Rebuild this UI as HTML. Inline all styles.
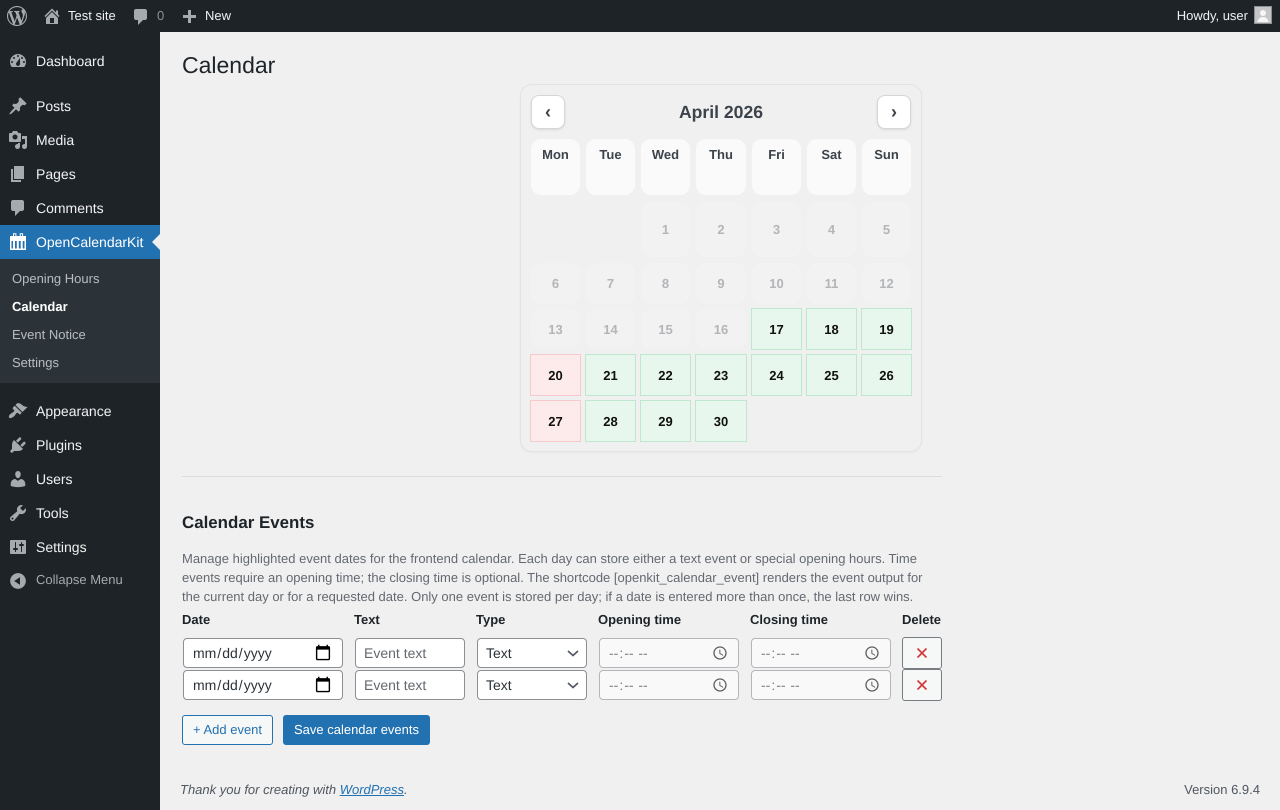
<!DOCTYPE html>
<html lang="en"><head><meta charset="utf-8"><title>Calendar</title>
<style>
html,body{margin:0;padding:0;width:1280px;height:810px;overflow:hidden;background:#f0f0f1;font:13px "Liberation Sans",sans-serif;color:#3c434a;text-rendering:geometricPrecision}
*{box-sizing:border-box}
.a,.t,svg.i,.c,input,select,button{position:absolute}
.t{white-space:nowrap;line-height:20px}
svg.i{width:20px;height:20px;fill:#a7aaad}
.m{left:36px;font-size:14px;color:#f0f0f1}
.s{left:12px;color:rgba(240,246,252,.7)}
.b{font-size:13px;color:#f0f0f1;top:6px}
.th{font-weight:bold;color:#1d2327;top:610px}
.c{display:flex;align-items:center;justify-content:center;font-weight:bold;font-size:13px;border-radius:10px;color:#b4b5b8;background:#f2f2f2}
.hd{background:#fafafa;color:#3c434a;align-items:flex-start;padding-top:8px;line-height:16px;height:56px;top:139px}
.h{box-sizing:content-box;margin:-1px;border:1px solid #bde8cd;background:#e8f7ed;border-radius:0;color:#111}
.r{border-color:#f6c9cb;background:#fdebec}
.x1{left:531px;width:49px}.x2{left:586px;width:49px}.x3{left:641px;width:49px}.x4{left:696px;width:50px}.x5{left:752px;width:49px}.x6{left:807px;width:49px}.x7{left:862px;width:49px}
.y1{top:202px;height:55px}.y2{top:263px;height:41px}.y3{top:309px;height:40px}.y4{top:355px;height:40px}.y5{top:401px;height:40px}
.nav{top:95px;width:34px;height:34px;background:#fff;border:1px solid #d6d6d6;border-radius:8px;box-shadow:0 1px 2px rgba(0,0,0,.1);font:bold 18px/30px "Liberation Sans",sans-serif;color:#3c434a;padding:0;text-align:center}
input,select{margin:0;height:30px;border:1px solid #8c8f94;border-radius:4px;background:#fff;color:#2c3338;font:14px "Liberation Sans",sans-serif;padding:0 8px;outline:0;text-rendering:geometricPrecision}
input::placeholder{color:#646970;opacity:1}
input::-webkit-calendar-picker-indicator{width:18px;height:18px;margin:-1px 2.500px 0 0;padding:0}
input[type=time]::-webkit-calendar-picker-indicator{width:16px;height:16px;margin:-1px 2.500px 0 0}
select{appearance:none;-webkit-appearance:none;width:110px;left:477px;padding:0 24px 0 8px}
.d{left:183px;width:160px}.e{left:355px;width:110px}
.o{width:140px;opacity:.6}
.del{left:902px;width:40px;height:32px;background:#f6f7f7;border:1px solid #787c82;border-radius:3px;padding:0;display:block}
.del svg{position:absolute;left:13px;top:9px;width:12px;height:12px;stroke:#d63638;stroke-width:1.6;fill:none}
.chev{position:absolute;left:566px;width:14px;height:14px;fill:none;stroke:#50575e;stroke-width:1.7}
.btn{top:715px;height:30px;border-radius:3px;font:13px "Liberation Sans",sans-serif;padding:0;text-align:center;line-height:28px;text-rendering:geometricPrecision}
</style></head><body>

<div class="a" style="left:0;top:0;width:1280px;height:32px;background:#1d2327"></div>
<div class="a" style="left:0;top:32px;width:160px;height:778px;background:#1d2327"></div>
<div class="a" style="left:0;top:225px;width:160px;height:34px;background:#2271b1"></div>
<div class="a" style="left:0;top:259px;width:160px;height:124px;background:#2c3338"></div>
<div class="a" style="left:152px;top:234px;width:0;height:0;border:8px solid transparent;border-left:0;border-right-color:#f0f0f1"></div>

<svg class="i" viewBox="0 0 20 20" style="left:7px;top:6px"><path d="M20 10c0-5.51-4.49-10-10-10C4.48 0 0 4.49 0 10c0 5.52 4.48 10 10 10 5.51 0 10-4.48 10-10zM7.78 15.37L4.37 6.22c.55-.02 1.17-.08 1.17-.08.5-.06.44-1.13-.06-1.11 0 0-1.45.11-2.37.11-.18 0-.37 0-.58-.01C4.12 2.69 6.87 1.11 10 1.11c2.33 0 4.45.87 6.05 2.34-.68-.11-1.65.39-1.65 1.58 0 .74.45 1.36.9 2.1.35.61.55 1.36.55 2.46 0 1.49-1.4 5-1.4 5l-3.03-8.37c.54-.02.82-.17.82-.17.5-.05.44-1.25-.06-1.22 0 0-1.44.12-2.38.12-.87 0-2.33-.12-2.33-.12-.5-.03-.56 1.2-.06 1.22l.92.08 1.26 3.41zM17.41 10c.24-.64.74-1.87.43-4.25.7 1.29 1.05 2.71 1.05 4.25 0 3.29-1.73 6.24-4.4 7.78.97-2.59 1.94-5.2 2.92-7.78zM6.1 18.09C3.12 16.65 1.11 13.53 1.11 10c0-1.3.23-2.48.72-3.59C3.25 10.3 4.67 14.2 6.1 18.09zm4.03-6.63l2.58 6.98c-.86.29-1.76.45-2.71.45-.79 0-1.57-.11-2.29-.33.81-2.38 1.62-4.74 2.42-7.1z"/></svg>
<svg class="i" viewBox="0 0 20 20" style="left:42px;top:6px"><path d="M16 8.5l1.53 1.53-1.06 1.06L10 4.62l-6.47 6.47-1.06-1.06L10 2.5l4 4v-2h2v4zm-6-2.46l6 5.99V18H4v-5.97zM12 17v-5H8v5h4z"/></svg>
<div class="t b" style="left:68px">Test site</div>
<svg class="i" viewBox="0 0 20 20" style="left:131px;top:7px"><path d="M5 2h9c1.1 0 2 .9 2 2v7c0 1.1-.9 2-2 2h-2l-5 5v-5H5c-1.1 0-2-.9-2-2V4c0-1.1.9-2 2-2z"/></svg>
<div class="t b" style="left:157px;color:#8c8f94">0</div>
<svg class="i" viewBox="0 0 20 20" style="left:179px;top:8px"><path d="M17 7v3h-5v5H9v-5H4V7h5V2h3v5h5z"/></svg>
<div class="t b" style="left:205px">New</div>
<div class="t b" style="right:32px">Howdy, user</div>
<svg class="a" viewBox="0 0 18 18" style="left:1254px;top:6px;width:18px;height:18px"><rect width="18" height="18" fill="#8c8f94"/><rect x="1" y="1" width="16" height="16" fill="#c6c6c6"/><circle cx="9" cy="7" r="3" fill="#f6f6f6"/><path d="M3.500 16c.3-3 2.500-5 5.500-5s5.200 2 5.500 5z" fill="#f6f6f6"/></svg>

<svg class="i" viewBox="0 0 20 20" style="left:8px;top:51px"><path fill-rule="evenodd" d="M3.760 16h12.480c1.100-1.370 1.760-3.110 1.760-5 0-4.420-3.580-8-8-8s-8 3.580-8 8c0 1.890.66 3.630 1.760 5zM10 4c.55 0 1 .45 1 1s-.45 1-1 1-1-.45-1-1 .45-1 1-1zM6 6c.55 0 1 .45 1 1s-.45 1-1 1-1-.45-1-1 .45-1 1-1zm8 0c.55 0 1 .45 1 1s-.45 1-1 1-1-.45-1-1 .45-1 1-1zm-5.370 5.550L12 7v6c0 1.100-.9 2-2 2s-2-.9-2-2c0-.57.24-1.080.63-1.450zM4 10c.55 0 1 .45 1 1s-.45 1-1 1-1-.45-1-1 .45-1 1-1zm12 0c.55 0 1 .45 1 1s-.45 1-1 1-1-.45-1-1 .45-1 1-1z"/></svg>
<div class="t m" style="top:51px">Dashboard</div>
<svg class="i" viewBox="0 0 20 20" style="left:8px;top:96px"><path d="M10.440 3.020l1.820-1.820 6.360 6.350-1.830 1.820c-1.050-.68-2.480-.57-3.410.36l-.75.75c-.92.93-1.040 2.350-.35 3.410l-1.830 1.820-2.410-2.410-2.800 2.790c-.42.42-3.380 2.710-3.800 2.290s1.860-3.390 2.280-3.810l2.790-2.790L4.100 9.360l1.830-1.820c1.050.69 2.480.57 3.400-.36l.75-.75c.93-.92 1.050-2.350.36-3.410z"/></svg>
<div class="t m" style="top:96px">Posts</div>
<svg class="i" viewBox="0 0 20 20" style="left:8px;top:130px"><path fill-rule="evenodd" d="M13 11V4c0-.55-.45-1-1-1h-1.670L9 1H5L3.670 3H2c-.55 0-1 .45-1 1v7c0 .55.45 1 1 1h10c.55 0 1-.45 1-1zM7 4.500c1.380 0 2.500 1.120 2.500 2.500S8.380 9.500 7 9.500 4.500 8.380 4.500 7 5.620 4.500 7 4.500zM14 6h5v10.500c0 1.380-1.120 2.500-2.500 2.500S14 17.880 14 16.500s1.120-2.500 2.500-2.500c.17 0 .34.020.5.050V9h-3V6zm-4 8.050V13h2v3.500c0 1.380-1.120 2.500-2.500 2.500S7 17.880 7 16.500 8.120 14 9.500 14c.17 0 .34.020.5.050z"/></svg>
<div class="t m" style="top:130px">Media</div>
<svg class="i" viewBox="0 0 20 20" style="left:8px;top:164px"><path d="M6 15V2h10v13H6zm-1 1h8v2H3V5h2v11z"/></svg>
<div class="t m" style="top:164px">Pages</div>
<svg class="i" viewBox="0 0 20 20" style="left:8px;top:198px"><path d="M5 2h9c1.100 0 2 .9 2 2v7c0 1.100-.9 2-2 2h-2l-5 5v-5H5c-1.100 0-2-.9-2-2V4c0-1.100.9-2 2-2z"/></svg>
<div class="t m" style="top:198px">Comments</div>
<svg class="i" viewBox="0 0 20 20" style="left:8px;top:232px;fill:#fff"><path fill-rule="evenodd" d="M2 4h16v14H2zM3.500 9v7.500H5V9zM7 9v7.500h1.800V9zM10.800 9v7.500h1.900V9zM14.700 9v7.500h1.800V9z"/><path d="M5.500 4.500V1.800h2.400v2.700M12.200 4.500V1.800h2.400v2.700" fill="none" stroke="#fff" stroke-width="1"/></svg>
<div class="t m" style="top:232px;color:#fff">OpenCalendarKit</div>

<div class="t s" style="top:269px">Opening Hours</div>
<div class="t s" style="top:297px;color:#fff;font-weight:bold">Calendar</div>
<div class="t s" style="top:325px">Event Notice</div>
<div class="t s" style="top:353px">Settings</div>

<svg class="i" viewBox="0 0 20 20" style="left:8px;top:401px"><path d="M14.480 11.060L7.410 3.990l1.500-1.500c.5-.56 2.300-.47 3.510.32 1.210.8 1.430 1.280 2.910 2.100 1.180.64 2.450 1.260 4.450.85zm-.71.71L6.700 4.700 4.930 6.470c-.39.39-.39 1.020 0 1.410l1.060 1.060c.39.39.39 1.030 0 1.420-.6.6-1.430 1.110-2.210 1.690-.35.26-.7.53-1.010.84C1.430 13.230.4 16 1.200 16.800c.8.8 3.570-.23 4.910-1.570.31-.31.58-.66.84-1.010.58-.78 1.090-1.610 1.690-2.210.39-.39 1.020-.39 1.410 0l1.060 1.060c.39.39 1.020.39 1.410 0z"/></svg>
<div class="t m" style="top:401px">Appearance</div>
<svg class="i" viewBox="0 0 20 20" style="left:8px;top:435px"><path d="M13.110 4.360L9.870 7.600 8 5.730l3.240-3.240c.35-.34 1.050-.2 1.560.32.52.51.66 1.210.31 1.550zm-8 1.770l.91-1.120 9.010 9.010-1.190.84c-.71.71-2.630 1.160-3.820 1.160H6.140L4.900 17.260c-.59.59-1.540.59-2.120 0-.59-.58-.59-1.530 0-2.120l1.240-1.240v-3.880c0-1.130.4-3.190 1.090-3.890zm7.260 3.970l3.240-3.240c.34-.35 1.040-.21 1.550.31.52.51.66 1.210.31 1.550l-3.240 3.250z"/></svg>
<div class="t m" style="top:435px">Plugins</div>
<svg class="i" viewBox="0 0 20 20" style="left:8px;top:469px"><path d="M10 9.250c-2.270 0-2.730-3.440-2.730-3.440C7 4.020 7.820 2 9.970 2c2.160 0 2.980 2.020 2.710 3.810 0 0-.41 3.440-2.680 3.440zm0 2.570L12.720 10c2.390 0 4.520 2.330 4.520 4.530v2.490s-3.650 1.130-7.240 1.130c-3.650 0-7.240-1.130-7.240-1.130v-2.490c0-2.250 1.940-4.480 4.470-4.480z"/></svg>
<div class="t m" style="top:469px">Users</div>
<svg class="i" viewBox="0 0 20 20" style="left:8px;top:503px"><path fill-rule="evenodd" d="M16.680 9.770c-1.340 1.340-3.300 1.670-4.950.99l-5.410 6.520c-.99.99-2.590.99-3.580 0s-.99-2.590 0-3.570l6.520-5.420c-.68-1.650-.35-3.610.99-4.950 1.280-1.280 3.120-1.620 4.720-1.060l-2.890 2.890 2.820 2.820 2.860-2.870c.53 1.580.18 3.390-1.080 4.650zM3.810 16.210c.4.39 1.040.39 1.430 0 .4-.4.4-1.040 0-1.430-.39-.4-1.030-.4-1.430 0-.39.39-.39 1.030 0 1.430z"/></svg>
<div class="t m" style="top:503px">Tools</div>
<svg class="i" viewBox="0 0 20 20" style="left:8px;top:537px"><path fill-rule="evenodd" d="M18 16V4c0-.55-.45-1-1-1H3c-.55 0-1 .45-1 1v12c0 .55.45 1 1 1h14c.55 0 1-.45 1-1zM8 11h1c.55 0 1 .45 1 1s-.45 1-1 1H8v1.500c0 .28-.22.5-.5.5s-.5-.22-.5-.5V13H6c-.55 0-1-.45-1-1s.45-1 1-1h1V5.500c0-.28.22-.5.5-.5s.5.22.5.5V11zm5-2h-1c-.55 0-1-.45-1-1s.45-1 1-1h1V5.500c0-.28.22-.5.5-.5s.5.22.5.5V7h1c.55 0 1 .45 1 1s-.45 1-1 1h-1v5.500c0 .28-.22.5-.5.5s-.5-.22-.5-.5V9z"/></svg>
<div class="t m" style="top:537px">Settings</div>
<svg class="i" viewBox="0 0 20 20" style="left:8px;top:571px"><path fill-rule="evenodd" d="M10 2.160c4.330 0 7.840 3.510 7.840 7.840s-3.510 7.840-7.840 7.840S2.160 14.330 2.160 10 5.710 2.160 10 2.160zm2 11.720V6.120L6.180 9.970z"/></svg>
<div class="t" style="left:36px;top:570px;color:#a7aaad">Collapse Menu</div>

<div class="t" style="left:182px;top:50px;font-size:23px;line-height:30px;color:#1d2327">Calendar</div>

<div class="a" style="left:520px;top:84px;width:402px;height:368px;background:#f0f0f0;border:1px solid #e3e3e3;border-radius:12px;box-shadow:0 1px 2px rgba(0,0,0,.04)"></div>
<button class="nav" style="left:531px">‹</button>
<button class="nav" style="left:877px">›</button>
<div class="t" style="left:521px;width:400px;text-align:center;top:102px;font-size:17.6px;font-weight:bold;color:#3c434a">April 2026</div>

<div class="c hd x1">Mon</div><div class="c hd x2">Tue</div><div class="c hd x3">Wed</div><div class="c hd x4">Thu</div><div class="c hd x5">Fri</div><div class="c hd x6">Sat</div><div class="c hd x7">Sun</div>

<div class="c x3 y1">1</div><div class="c x4 y1">2</div><div class="c x5 y1">3</div><div class="c x6 y1">4</div><div class="c x7 y1">5</div>
<div class="c x1 y2">6</div><div class="c x2 y2">7</div><div class="c x3 y2">8</div><div class="c x4 y2">9</div><div class="c x5 y2">10</div><div class="c x6 y2">11</div><div class="c x7 y2">12</div>
<div class="c x1 y3">13</div><div class="c x2 y3">14</div><div class="c x3 y3">15</div><div class="c x4 y3">16</div><div class="c h x5 y3">17</div><div class="c h x6 y3">18</div><div class="c h x7 y3">19</div>
<div class="c h r x1 y4">20</div><div class="c h x2 y4">21</div><div class="c h x3 y4">22</div><div class="c h x4 y4">23</div><div class="c h x5 y4">24</div><div class="c h x6 y4">25</div><div class="c h x7 y4">26</div>
<div class="c h r x1 y5">27</div><div class="c h x2 y5">28</div><div class="c h x3 y5">29</div><div class="c h x4 y5">30</div>

<div class="a" style="left:182px;top:476px;width:760px;height:1px;background:#dcdcde"></div>
<div class="t" style="left:182px;top:513px;font-size:16.9px;font-weight:bold;color:#1d2327">Calendar Events</div>
<div class="t" style="left:182px;top:549px;line-height:19px;color:#646970">Manage highlighted event dates for the frontend calendar. Each day can store either a text event or special opening hours. Time<br>events require an opening time; the closing time is optional. The shortcode [openkit_calendar_event] renders the event output for<br>the current day or for a requested date. Only one event is stored per day; if a date is entered more than once, the last row wins.</div>

<div class="t th" style="left:182px">Date</div>
<div class="t th" style="left:354px">Text</div>
<div class="t th" style="left:476px">Type</div>
<div class="t th" style="left:598px">Opening time</div>
<div class="t th" style="left:750px">Closing time</div>
<div class="t th" style="left:902px">Delete</div>

<input type="date" class="d" style="top:638px">
<input type="text" class="e" style="top:638px" placeholder="Event text">
<select style="top:638px"><option>Text</option></select>
<svg class="chev" viewBox="0 0 14 14" style="top:646px"><path d="M2 5l5 4.500L12 5"/></svg>
<input type="time" class="o" style="left:599px;top:638px">
<input type="time" class="o" style="left:751px;top:638px">
<button class="del" style="top:637px"><svg viewBox="0 0 12 12"><path d="M1.500 1.500l9 9M10.500 1.500l-9 9"/></svg></button>

<input type="date" class="d" style="top:670px">
<input type="text" class="e" style="top:670px" placeholder="Event text">
<select style="top:670px"><option>Text</option></select>
<svg class="chev" viewBox="0 0 14 14" style="top:678px"><path d="M2 5l5 4.500L12 5"/></svg>
<input type="time" class="o" style="left:599px;top:670px">
<input type="time" class="o" style="left:751px;top:670px">
<button class="del" style="top:669px"><svg viewBox="0 0 12 12"><path d="M1.500 1.500l9 9M10.500 1.500l-9 9"/></svg></button>

<button class="btn" style="left:182px;width:91px;background:#f6f7f7;border:1px solid #2271b1;color:#2271b1">+ Add event</button>
<button class="btn" style="left:283px;width:147px;background:#2271b1;border:1px solid #2271b1;color:#fff">Save calendar events</button>

<div class="t" style="left:180px;top:780px;font-style:italic;color:#50575e">Thank you for creating with <span style="color:#2271b1;text-decoration:underline">WordPress</span>.</div>
<div class="t" style="right:20px;top:780px;color:#50575e">Version 6.9.4</div>
</body></html>
